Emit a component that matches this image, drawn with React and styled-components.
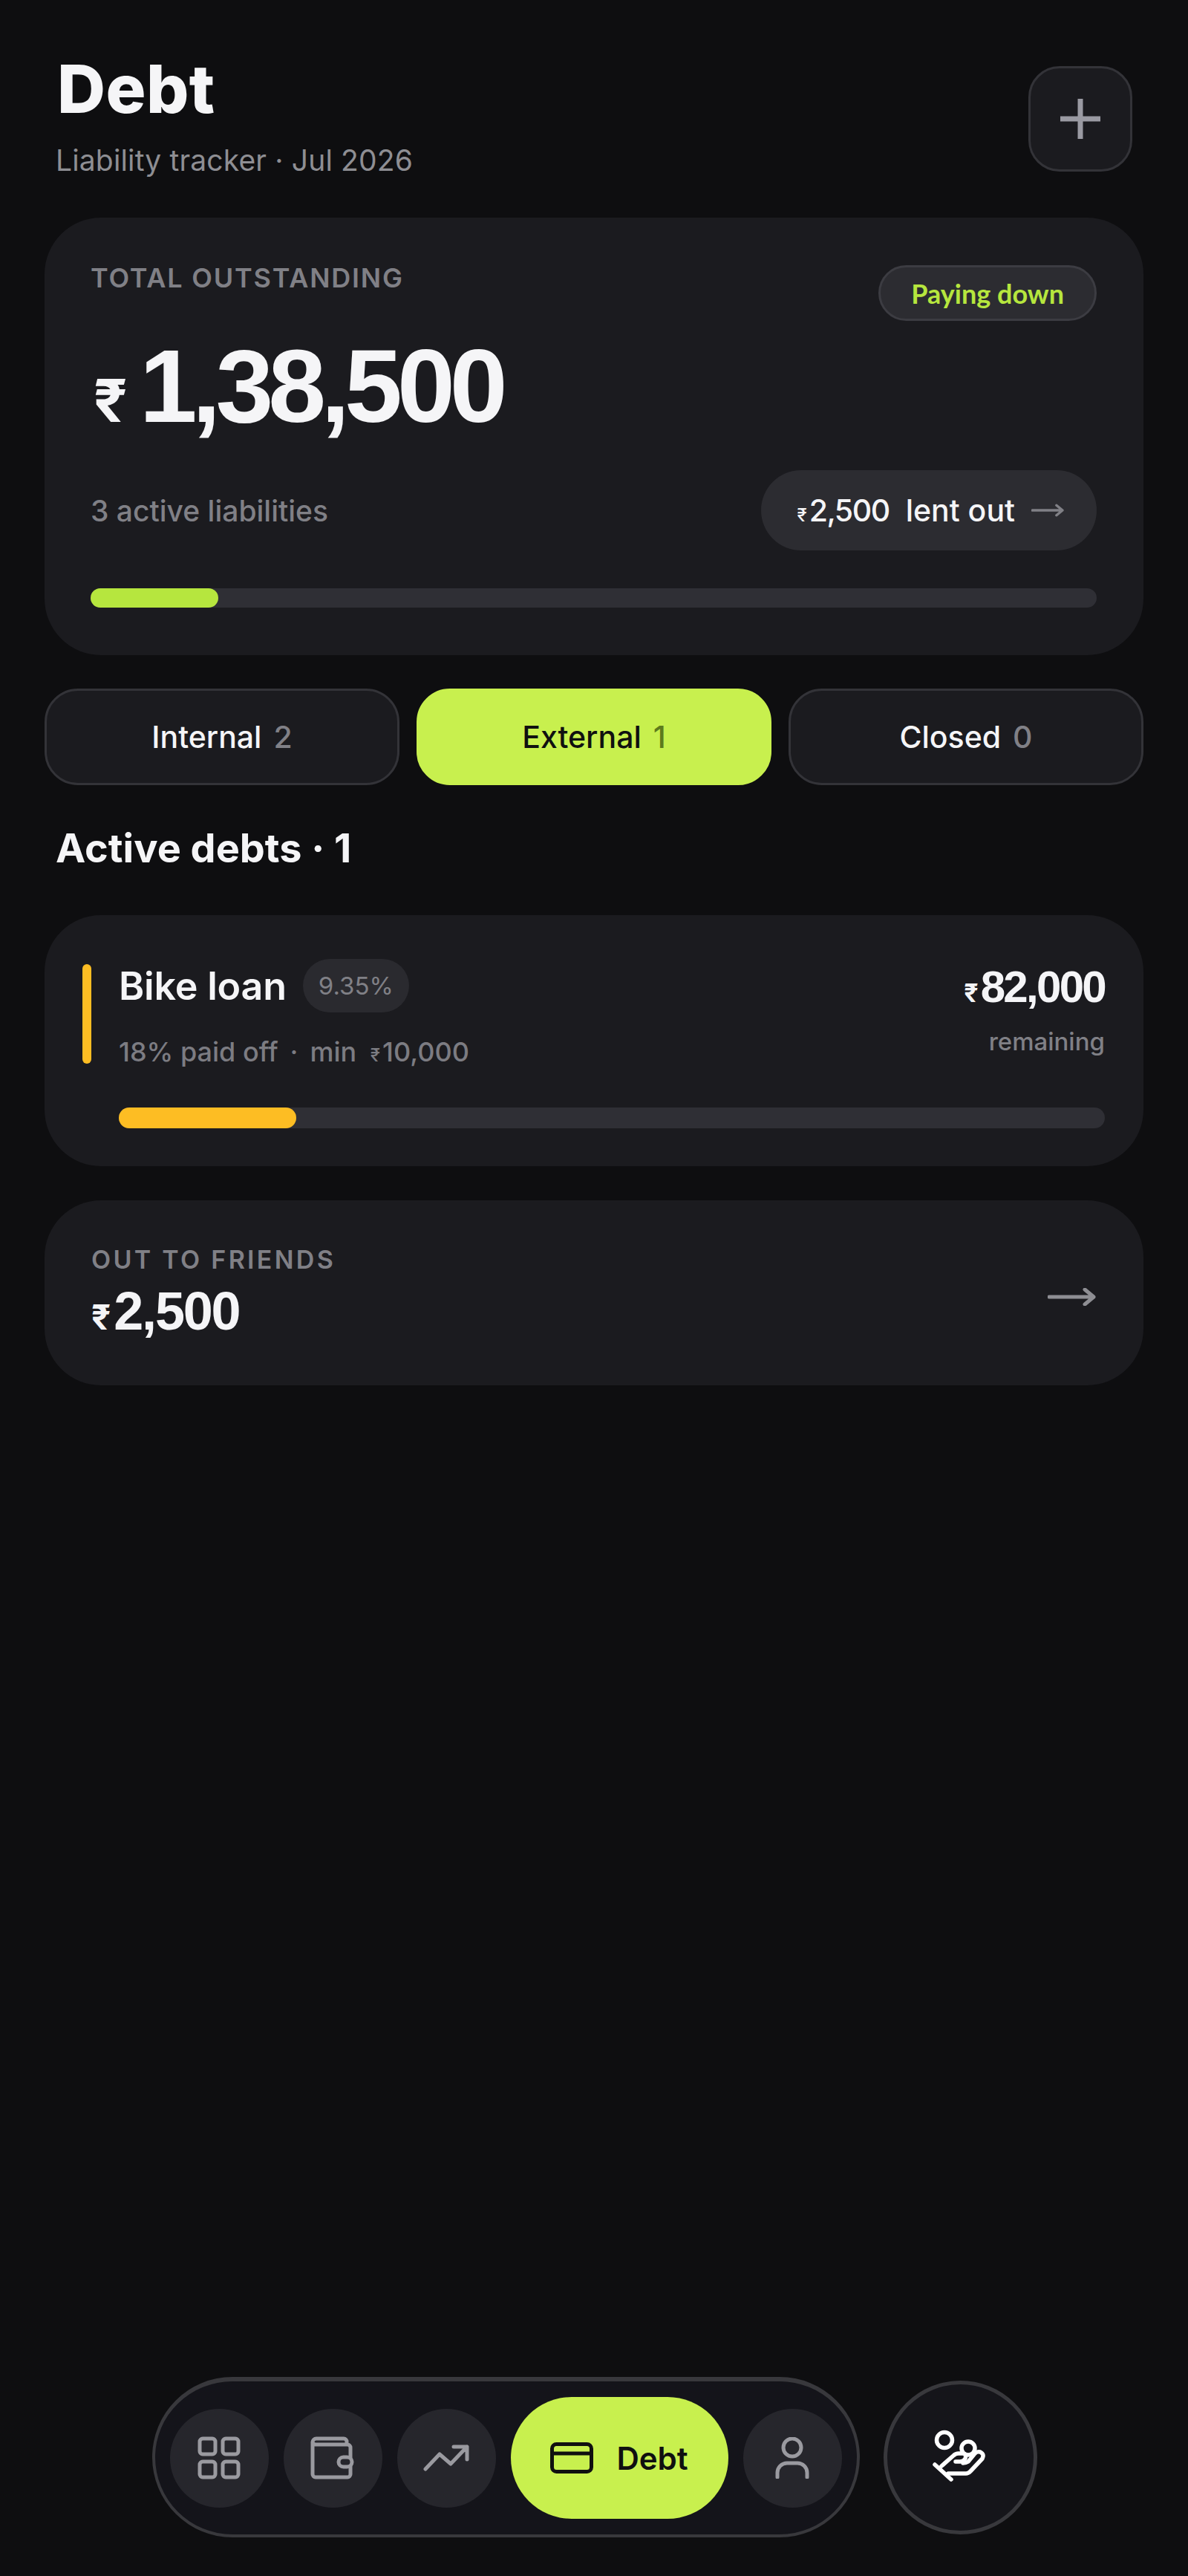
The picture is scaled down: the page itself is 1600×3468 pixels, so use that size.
import React from "react";
import styled, { createGlobalStyle } from "styled-components";

const GlobalStyle = createGlobalStyle`
  * { box-sizing: border-box; }
  html, body { margin: 0; padding: 0; background: #0e0e10; }
  body { font-family: "Inter", "Liberation Sans", sans-serif; color: #fff; }
`;

const Page = styled.div`
  width: 1600px;
  height: 3468px;
  padding: 0 60px 52px;
  display: flex;
  flex-direction: column;
  background: #0e0e10;
`;

const Header = styled.header`
  display: flex;
  justify-content: space-between;
  align-items: flex-start;
  padding: 75px 15px 0 15px;
  margin-bottom: 53px;
`;

const Title = styled.h1`
  margin: 0 0 0 2px;
  font-size: 90px;
  line-height: 90px;
  font-weight: 800;
  letter-spacing: 0.4px;
  color: #f5f5f7;
`;

const Subtitle = styled.p`
  margin: 27px 0 0;
  font-size: 39px;
  line-height: 48px;
  font-weight: 400;
  letter-spacing: 0.15px;
  color: #8e8e93;
`;

const AddButton = styled.button`
  width: 140px;
  height: 142px;
  margin-top: 14px;
  border-radius: 42px;
  border: 3px solid #333338;
  background: #1b1b1f;
  display: flex;
  align-items: center;
  justify-content: center;
  padding: 0;
  color: #9a9aa2;
`;

const Card = styled.section`
  background: #1b1b1f;
  border-radius: 76px;
`;

const HeroCard = styled(Card)`
  padding: 58px 63px 64px 62px;
`;

const HeroTop = styled.div`
  display: flex;
  justify-content: space-between;
  align-items: flex-start;
`;

const Eyebrow = styled.div`
  font-size: ${(p) => p.$size || 36}px;
  line-height: 46px;
  font-weight: 600;
  letter-spacing: ${(p) => p.$track || 1.8}px;
  color: #808086;
`;

const StatusPill = styled.div`
  height: 75px;
  margin-top: 6px;
  padding: 0 41px;
  border-radius: 38px;
  border: 3px solid #3c3c42;
  background: #2c2c31;
  display: flex;
  align-items: center;
  font-family: "Lato", "Inter", sans-serif;
  font-size: 36px;
  font-weight: 700;
  color: #b6e63e;
`;

const Rupee = styled.span`
  font-family: "Inter", sans-serif;
  font-size: ${(p) => p.$size}px;
  line-height: 1;
  font-weight: ${(p) => p.$weight || 700};
  letter-spacing: 0;
  margin-left: ${(p) => p.$left || 0}px;
  margin-right: ${(p) => p.$gap || 0}px;
`;

const Figure = styled.div`
  font-family: "Liberation Sans", Arial, sans-serif;
  font-weight: 700;
  color: #f5f5f7;
`;

const HeroAmount = styled(Figure)`
  margin: 18px 0 0 4px;
  font-size: 140px;
  line-height: 140px;
  letter-spacing: -7px;
`;

const HeroMeta = styled.div`
  display: flex;
  justify-content: space-between;
  align-items: center;
  margin-top: 43px;
`;

const MetaText = styled.span`
  font-size: 39px;
  font-weight: 500;
  color: #808086;
`;

const LentPill = styled.div`
  height: 108px;
  padding: 0 44px 0 48px;
  border-radius: 54px;
  background: #2c2c31;
  display: flex;
  align-items: center;
  font-size: 41px;
  font-weight: 500;
  color: #f5f5f7;
  svg { margin-left: 22px; color: #808086; }
`;

const LentAmount = styled.span`
  margin-right: 22px;
  letter-spacing: -1.5px;
`;

const Track = styled.div`
  height: ${(p) => p.$height}px;
  margin: ${(p) => p.$margin};
  border-radius: ${(p) => p.$height / 2}px;
  background: #2f2f35;
`;

const Fill = styled.div`
  height: 100%;
  border-radius: inherit;
  background: ${(p) => p.$color};
`;

const Tabs = styled.div`
  display: grid;
  grid-template-columns: repeat(3, 1fr);
  gap: 23px;
  margin-top: 45px;
`;

const Tab = styled.button`
  height: 130px;
  border-radius: 45px;
  border: 3px solid ${(p) => (p.$active ? "#c8f04e" : "#333338")};
  background: ${(p) => (p.$active ? "#c8f04e" : "#1b1b1f")};
  color: ${(p) => (p.$active ? "#101010" : "#f5f5f7")};
  font-family: inherit;
  font-size: 41px;
  font-weight: 500;
  padding: 0;
`;

const TabCount = styled.span`
  margin-left: 16px;
  color: ${(p) => (p.$active ? "#5d7a1c" : "#808086")};
`;

const SectionTitle = styled.h2`
  margin: 53px 0 58px 15px;
  font-size: 54px;
  line-height: 64px;
  font-weight: 700;
  letter-spacing: 0;
  color: #f5f5f7;
`;

const LoanCard = styled(Card)`
  padding: 59px 52px 51px 51px;
`;

const LoanRow = styled.div`
  display: flex;
  align-items: flex-start;
`;

const Accent = styled.div`
  width: 12px;
  height: 134px;
  margin: 7px 37px 0 0;
  border-radius: 6px;
  background: #fdbd23;
`;

const LoanInfo = styled.div`
  flex: 1;
`;

const LoanName = styled.div`
  display: flex;
  align-items: center;
  height: 72px;
`;

const NameText = styled.span`
  font-size: 52px;
  line-height: 72px;
  font-weight: 600;
  letter-spacing: -0.2px;
  color: #f5f5f7;
  padding-top: 2px;
`;

const RatePill = styled.span`
  height: 72px;
  margin-left: 22px;
  padding: 0 21px;
  border-radius: 36px;
  background: #2a2a2f;
  display: flex;
  align-items: center;
  font-size: 33px;
  color: #808086;
`;

const LoanMeta = styled.div`
  margin-top: 30px;
  font-size: 36px;
  line-height: 46px;
  font-weight: 500;
  color: #7c7c82;
`;

const Dot = styled.span`
  margin: 0 16px;
`;

const LoanRight = styled.div`
  text-align: right;
  padding-top: 3px;
`;

const LoanAmount = styled(Figure)`
  font-size: 60px;
  line-height: 70px;
  letter-spacing: -2.7px;
`;

const Remaining = styled.div`
  margin-top: 16px;
  font-size: 33px;
  line-height: 44px;
  font-weight: 500;
  color: #808086;
`;

const OutCard = styled(Card)`
  margin-top: 46px;
  padding: 57px 64px 60px 63px;
  display: flex;
  justify-content: space-between;
  align-items: center;
  svg { margin-top: 14px; color: #8e8e93; }
`;

const OutAmount = styled(Figure)`
  margin-top: 6px;
  font-size: 72px;
  line-height: 80px;
  letter-spacing: -2.2px;
`;

const Footer = styled.footer`
  margin-top: auto;
  padding-left: 1px;
  display: flex;
  justify-content: center;
  align-items: center;
  gap: 32px;
`;

const Nav = styled.nav`
  width: 953px;
  height: 216px;
  border-radius: 108px;
  border: 4px solid #38383c;
  border-top-width: 6px;
  background: #14141a;
  display: flex;
  align-items: center;
  justify-content: center;
  gap: 20px;
`;

const NavItem = styled.div`
  width: 133px;
  height: 133px;
  border-radius: 50%;
  background: #26262c;
  display: flex;
  align-items: center;
  justify-content: center;
  color: #9a9aa0;
`;

const NavActive = styled.div`
  width: 293px;
  height: 164px;
  border-radius: 82px;
  background: #c8f04e;
  display: flex;
  align-items: center;
  justify-content: center;
  gap: 31px;
  color: #101010;
  font-size: 42px;
  font-weight: 600;
`;

const Fab = styled.button`
  width: 207px;
  height: 207px;
  padding: 0;
  border-radius: 50%;
  border: 5px solid #38383c;
  background: #15151a;
  display: flex;
  align-items: center;
  justify-content: center;
  color: #fff;
`;

const Arrow = ({ width, height, stroke }) => (
  <svg width={width} height={height} viewBox="0 0 65 24" fill="none" stroke="currentColor" strokeWidth={stroke} strokeLinecap="round" strokeLinejoin="round">
    <path d="M2 12H62M50 2L62 12L50 22" />
  </svg>
);

const PlusIcon = () => (
  <svg width="54" height="54" viewBox="0 0 54 54" stroke="currentColor" strokeWidth="7">
    <path d="M27 0V54M0 27H54" />
  </svg>
);

const NavIconBase = ({ w, h, sw = 5, children }) => (
  <svg width={w} height={h} viewBox={`0 0 ${w} ${h}`} fill="none" stroke="currentColor" strokeWidth={sw} strokeLinecap="round" strokeLinejoin="round">
    {children}
  </svg>
);

const GridIcon = () => (
  <NavIconBase w={58} h={58}>
    <rect x="3" y="3" width="21" height="21" rx="4" />
    <rect x="34" y="3" width="21" height="21" rx="4" />
    <rect x="3" y="34" width="21" height="21" rx="4" />
    <rect x="34" y="34" width="21" height="21" rx="4" />
  </NavIconBase>
);

const WalletIcon = () => (
  <NavIconBase w={60} h={58}>
    <path d="M49 11V7a4 4 0 0 0-4-4H8a5 5 0 0 0-5 5V51a4 4 0 0 0 4 4H50a4 4 0 0 0 4-4V15a4 4 0 0 0-4-4H8a5 5 0 0 1-5-3" />
    <rect x="38" y="28" width="18" height="13" rx="6.5" fill="#26262c" />
  </NavIconBase>
);

const TrendIcon = () => (
  <NavIconBase w={62} h={36} sw={5}>
    <path d="M3 33L22 13L37 26L59 3M41 3H59V20" />
  </NavIconBase>
);

const CardIcon = () => (
  <NavIconBase w={58} h={42} sw={5}>
    <rect x="2.5" y="2.5" width="53" height="37" rx="6" />
    <path d="M2.5 15H55.5" />
  </NavIconBase>
);

const UserIcon = () => (
  <NavIconBase w={46} h={56}>
    <circle cx="23" cy="14" r="12" />
    <path d="M3 54V48a13 13 0 0 1 13-13H30a13 13 0 0 1 13 13V54" />
  </NavIconBase>
);

const HandIcon = () => (
  <NavIconBase w={110} h={100} sw={5.5}>
    <circle cx="34" cy="27" r="10.5" />
    <circle cx="66" cy="38" r="9" />
    <path d="M21 60L43 80M30 62L46 48Q49 45 53 45H59Q64 46 62 52Q60 56 55 56H49" />
    <path d="M39 72H63Q66 72 69 69L85 52Q88 46 82 43Q78 42 75 45L66 56Q63 58 59 58" />
  </NavIconBase>
);

const App = () => {
  return (
    <>
      <GlobalStyle />
      <Page>
        <Header>
          <div>
            <Title>Debt</Title>
            <Subtitle>Liability tracker · Jul 2026</Subtitle>
          </div>
          <AddButton>
            <PlusIcon />
          </AddButton>
        </Header>

        <HeroCard>
          <HeroTop>
            <Eyebrow>TOTAL OUTSTANDING</Eyebrow>
            <StatusPill>Paying down</StatusPill>
          </HeroTop>
          <HeroAmount>
            <Rupee $size={80} $gap={16}>₹</Rupee>1,38,500
          </HeroAmount>
          <HeroMeta>
            <MetaText>3 active liabilities</MetaText>
            <LentPill>
              <LentAmount>
                <Rupee $size={24} $weight={500} $gap={3}>₹</Rupee>2,500
              </LentAmount>
              lent out
              <Arrow width={44} height={20} stroke={5} />
            </LentPill>
          </HeroMeta>
          <Track $height={26} $margin="51px 0 0">
            <Fill $color="#b6e63e" style={{ width: "12.7%" }} />
          </Track>
        </HeroCard>

        <Tabs>
          <Tab>Internal<TabCount>2</TabCount></Tab>
          <Tab $active>External<TabCount $active>1</TabCount></Tab>
          <Tab>Closed<TabCount>0</TabCount></Tab>
        </Tabs>

        <SectionTitle>Active debts · 1</SectionTitle>

        <LoanCard>
          <LoanRow>
            <Accent />
            <LoanInfo>
              <LoanName>
                <NameText>Bike loan</NameText>
                <RatePill>9.35%</RatePill>
              </LoanName>
              <LoanMeta>
                18% paid off<Dot>·</Dot>min <Rupee $size={24} $weight={500} $left={9} $gap={3}>₹</Rupee>10,000
              </LoanMeta>
            </LoanInfo>
            <LoanRight>
              <LoanAmount>
                <Rupee $size={34} $gap={3}>₹</Rupee>82,000
              </LoanAmount>
              <Remaining>remaining</Remaining>
            </LoanRight>
          </LoanRow>
          <Track $height={28} $margin="52px 0 0 49px">
            <Fill $color="#fdbd23" style={{ width: "18%" }} />
          </Track>
        </LoanCard>

        <OutCard>
          <div>
            <Eyebrow $size={34} $track={3.3}>OUT TO FRIENDS</Eyebrow>
            <OutAmount>
              <Rupee $size={46} $gap={4}>₹</Rupee>2,500
            </OutAmount>
          </div>
          <Arrow width={65} height={24} stroke={5} />
        </OutCard>

        <Footer>
          <Nav>
            <NavItem><GridIcon /></NavItem>
            <NavItem><WalletIcon /></NavItem>
            <NavItem><TrendIcon /></NavItem>
            <NavActive><CardIcon />Debt</NavActive>
            <NavItem><UserIcon /></NavItem>
          </Nav>
          <Fab><HandIcon /></Fab>
        </Footer>
      </Page>
    </>
  );
};

export default App;
